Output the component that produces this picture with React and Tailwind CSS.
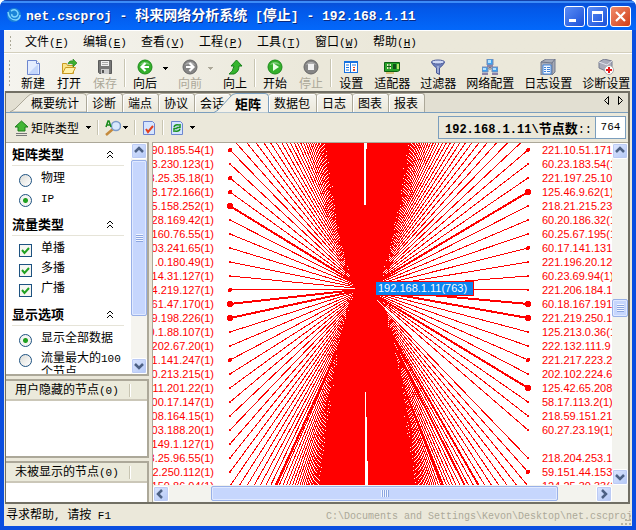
import React from 'react';

const leftNodes = [
  ['90.185.54(1)', 2], ['3.230.123(1)', 1], ['8.25.35.18(1)', 2], ['8.172.166(1)', 2], ['5.158.252(1)', 3],
  ['28.169.42(1)', 1], ['160.76.55(1)', 1], ['03.241.65(1)', 1], ['.0.180.49(1)', 1], ['14.31.127(1)', 1],
  ['4.219.127(1)', 2], ['61.47.170(1)', 3], ['9.198.226(1)', 3], ['0.1.88.107(1)', 1], ['202.67.20(1)', 1],
  ['1.141.247(1)', 2], ['0.213.215(1)', 1], ['11.201.22(1)', 1], ['00.17.147(1)', 1], ['08.164.15(1)', 1],
  ['03.188.20(1)', 1], ['149.1.127(1)', 1], ['8.25.96.55(1)', 1], ['2.250.112(1)', 1], ['150.86.04(1)', 1],
];

const rightNodes = [
  ['221.10.51.171', 2], ['60.23.183.54(1)', 1], ['221.197.25.10', 1], ['125.46.9.62(1)', 3], ['218.21.215.23', 1],
  ['60.20.186.32(1)', 1], ['60.25.67.195(1)', 1], ['60.17.141.131', 2], ['221.196.20.12', 1], ['60.23.69.94(1)', 1],
  ['221.206.184.1', 1], ['60.18.167.191', 3], ['221.219.250.1', 3], ['125.213.0.36(1)', 1], ['222.132.111.9', 1],
  ['221.217.223.2', 2], ['202.102.224.6', 1], ['125.42.65.208', 3], ['58.17.113.2(1)', 1], ['218.59.151.21', 1],
  ['60.27.23.19(1)', 1], ['', 0], ['218.204.253.1', 1], ['59.151.44.153', 2], ['124.25.30.33(1)', 1],
];

const HUB = { x: 151, y: 146 };
const DOT = { 1: 1, 2: 2, 3: 3 };

function Fan({ x, nodes }) {
  const rows = [];
  for (let i = -170; i < 200; i++) {
    const node = nodes[i];
    if (node && node[1] === 0) continue;
    rows.push({ i, y: 7 + i * 14, size: node ? node[1] : 1 });
  }
  return (
    <g>
      {rows.map((r) => (
        <line key={r.i} x1={HUB.x} y1={HUB.y} x2={x} y2={r.y} strokeWidth={r.size === 3 ? 2 : 1} />
      ))}
      {nodes.map(([, size], i) =>
        size ? <circle key={i} cx={x} cy={7 + i * 14} r={DOT[size]} fill="#f00" stroke="none" /> : null
      )}
    </g>
  );
}

function MatrixGraph() {
  return (
    <svg viewBox="0 0 326 343" width="326" height="343" shapeRendering="crispEdges" stroke="#f00" className="block" aria-label="矩阵">
      <Fan x={16} nodes={leftNodes} />
      <Fan x={314} nodes={rightNodes} />
      <g strokeWidth="2">
        <path d="M151 146 62 343M151 146 229 343M151 146 251 343M151 146 265 343" fill="none" />
      </g>
      <path d="M132 0h40l-13 146 13 197h-42l13-197z" fill="#f00" stroke="none" />
      <path d="M150 0h3v6h-1v56h-2zM151 249h1v25h1v44h1v25h-3v-69h0z" fill="#fff" stroke="none" />
    </svg>
  );
}

const Lat = ({ children, className = 'text-[11px]' }) => (
  <span className={`font-['Liberation_Mono',monospace] ${className}`}>{children}</span>
);

const Grip = ({ className }) => (
  <span className={`w-[3px] shrink-0 bg-[radial-gradient(circle,#aaa796_1px,transparent_1px)] bg-[length:3px_4px] ${className}`} />
);

const Caret = ({ muted }) => (
  <svg width="5" height="3" className="shrink-0" shapeRendering="crispEdges">
    <path d="M0 0h5L2.5 3z" fill={muted ? '#aca899' : '#000'} />
  </svg>
);

const Sep = ({ className }) => <span className={`w-[2px] shrink-0 border-l border-[#c8c5b2] bg-white ${className}`} />;

function Round({ color, children }) {
  return (
    <>
      <circle cx="8" cy="8" r="7" fill={color[0]} stroke={color[1]} />
      <path d="M3 6a5.500 5 0 0 1 10 0q-5-2-10 0z" fill="#fff" opacity=".35" />
      {children}
    </>
  );
}
const GREEN = ['#35b02c', '#1c8a1a'];
const GREY = ['#858585', '#666'];

const icons = {
  new: (
    <>
      <path d="M2.500 1.500h9l3 3v11h-12z" fill="#e4edff" stroke="#6d86cf" />
      <path d="M4 14 13 5v10H4z" fill="#c3d6fb" />
      <path d="M11.500 1.500v3h3" fill="#fff" stroke="#6d86cf" />
    </>
  ),
  open: (
    <>
      <path d="M1.500 14.500v-10h4l1 2h6v8z" fill="#fbe58a" stroke="#c99a22" />
      <path d="m1.500 14.500 3-6h10l-3 6z" fill="#fff2a8" stroke="#c99a22" />
      <path d="M7 5q1-4 5-3V0l4 4-4 4V5q-3-1-5 0z" fill="#3eb030" stroke="#1f7f1c" strokeWidth=".6" />
    </>
  ),
  save: (
    <>
      <path d="M1.500 1.500h13v13h-12l-1-1z" fill="#777" stroke="#5b5b5b" />
      <path d="M4 2h8v5H4z" fill="#f0f0f0" />
      <path d="M5 3.500h6M5 5.500h6" stroke="#aaa" />
      <path d="M4 10h8v5H4z" fill="#ccc" />
      <path d="M5 11h2v3H5z" fill="#555" />
    </>
  ),
  back: <Round color={GREEN}><path d="M8.500 4 4.500 8l4 4M5 8h7" fill="none" stroke="#fff" strokeWidth="2.200" /></Round>,
  forward: <Round color={GREY}><path d="m7.500 4 4 4-4 4M11 8H4" fill="none" stroke="#fff" strokeWidth="2.200" /></Round>,
  up: <path d="M9.500 1 15 7h-3q0 6-5 8H2q4-2 5-8H4z" fill="#35b52d" stroke="#16801a" />,
  play: <Round color={GREEN}><path d="m6 4 6 4-6 4z" fill="#e9ffe4" /></Round>,
  stop: <Round color={GREY}><path d="M5 5h6v6H5z" fill="#f1f1f1" /></Round>,
  settings: (
    <>
      <path d="M1 2h14v12H1z" fill="#1772e0" />
      <path d="M2 4h5v9H2zM8 4h6v9H8z" fill="#fff" />
      <path d="M3 6h3M3 8.500h3M3 11h3" stroke="#1772e0" />
      <path d="M9 5h4v2H9z" fill="#8bbdf5" />
      <path d="M10 8h2v1h-2zM10 10h2v2h-2z" fill="#e64d28" />
    </>
  ),
  adapter: (
    <>
      <path d="M.5 3.500h15v8l-2 1H.5z" fill="#28a32a" stroke="#0c6112" />
      <path d="M3 5h4v5H3z" fill="#e8f3c5" />
      <path d="M3 7.500h4M5 5v5" stroke="#0c6112" />
      <path d="M9 5h3v5H9z" fill="#11501a" />
      <path d="M3 13v2M5 13v2M7 13v2M9 13v2" stroke="#c29a22" />
      <path d="M13 5h2v5h-2z" fill="#b7e66a" />
    </>
  ),
  filter: (
    <>
      <path d="M1.500 3q0 2 5 6v5l3 1.500V9q5-4 5-6z" fill="#7183bd" stroke="#4a5a98" />
      <ellipse cx="8" cy="3" rx="6.500" ry="2" fill="#cfd9f5" stroke="#4a5a98" />
      <path d="m8 7v7" stroke="#c9d4f3" />
    </>
  ),
  network: (
    <>
      <path d="M8 7v4M8 8l-4 3M8 8l4 3" stroke="#777" />
      <path d="M5 0h6v6H5zM0 8h6v5H0zM10 8h6v5h-6z" fill="#3fa2ee" stroke="#7c89b2" />
      <path d="M6 1h3v3H6zM1 9h3v2H1zM11 9h3v2h-3z" fill="#b3e1ff" />
      <path d="M5 7h6M0 15h6M10 15h6" stroke="#8b83a8" strokeWidth="2" />
    </>
  ),
  log: (
    <>
      <path d="m1 3 5-3h9v13l-3 3H1z" fill="#a6abb8" stroke="#737a8d" />
      <path d="m1 3 11 1 3-4M12 4v12" fill="none" stroke="#6f7689" />
      <path d="M3 6h8v9H3z" fill="#f1f7ff" stroke="#3e82d8" />
      <path d="M4 8.500h2M7 8.500h3M4 10.500h2M7 10.500h3M4 12.500h2M7 12.500h3" stroke="#3e82d8" />
    </>
  ),
  diagnose: (
    <>
      <path d="m1 3 5-3 8 2v7l-4 4-9-4z" fill="#a9acbb" stroke="#777c90" />
      <path d="m1 3 8 3 5-4" fill="none" stroke="#e1e3ec" />
      <circle cx="11" cy="11" r="4.500" fill="#fff" stroke="#aaa" />
      <path d="M11 8v6M8 11h6" stroke="#e31b1b" strokeWidth="2" />
    </>
  ),
};

const Icon = ({ name }) => <svg viewBox="0 0 16 16" width="16" height="16">{icons[name]}</svg>;

function Tool({ icon, label, muted }) {
  return (
    <button type="button" disabled={muted} className={`flex h-full shrink-0 flex-col items-center pt-[5px] leading-[15px] ${label.length > 2 ? 'px-[5px]' : 'px-[6px]'} ${muted ? 'text-[#aca899]' : ''}`}>
      <Icon name={icon} />
      {label}
    </button>
  );
}

const CaretBtn = ({ muted, label }) => (
  <button type="button" aria-label={label} className="flex h-full w-[9px] shrink-0 items-start pt-[13px]"><Caret muted={muted} /></button>
);

const arrows = { up: 'm4 9 4-4 4 4', down: 'm4 6 4 4 4-4', left: 'M9 4 5 8l4 4', right: 'm6 4 4 4-4 4' };
const Arrow = ({ dir }) => (
  <button type="button" aria-label={dir} className="size-4 shrink-0 rounded-[2px] border border-white bg-linear-to-br from-[#dce6ff] to-[#b4c8f6] shadow-[inset_0_0_0_1px_#bccbf5]">
    <svg viewBox="1 1 14 14" width="14" height="14"><path d={arrows[dir]} fill="none" stroke="#4d6185" strokeWidth="2.500" /></svg>
  </button>
);

function Thumb({ className, across }) {
  return (
    <div className={`flex items-center justify-center rounded-[2px] border border-[#98b0e8] bg-[#c6d6fd] shadow-[inset_0_0_0_1px_#e0e9ff] ${className}`}>
      <span className={across
        ? 'h-[7px] w-[8px] bg-[repeating-linear-gradient(90deg,#f2f6ff_0_1px,#8ca6e0_1px_2px)]'
        : 'h-[8px] w-[7px] bg-[repeating-linear-gradient(180deg,#f2f6ff_0_1px,#8ca6e0_1px_2px)]'} />
    </div>
  );
}

function Group({ title, children }) {
  return (
    <section className="pb-[3px] pl-[6px]">
      <h2 className="mr-[7px] flex h-[23px] items-center justify-between border-b border-[#e6e4d8] pr-[10px] text-[13px] leading-[20px] font-bold">
        {title}
        <svg width="8" height="9" viewBox="0 0 8 9"><path d="M1 4l3-3 3 3M1 8l3-3 3 3" fill="none" stroke="#000" /></svg>
      </h2>
      <div className="pt-[4px]">{children}</div>
    </section>
  );
}

function Option({ type, name, label, checked }) {
  return (
    <label className="flex h-[20px] items-start pl-[7px] leading-[12px]">
      {type === 'radio' ? (
        <input type="radio" name={name} defaultChecked={checked} className="mt-[4px] mr-[9px] size-[13px] shrink-0 appearance-none rounded-full border border-[#1d5281] bg-linear-to-br from-[#dcdcd7] to-white checked:bg-[radial-gradient(circle,#21a121_2px,#f4f4f1_3px)]" />
      ) : (
        <span className="relative mt-[4px] mr-[9px] size-[13px] shrink-0">
          <input type="checkbox" defaultChecked={checked} className="block size-[13px] appearance-none border border-[#1d5281] bg-[#f6f6f3]" />
          <svg viewBox="0 0 13 13" width="13" height="13" className="pointer-events-none absolute inset-0"><path d="m3 6 2.500 3L10 4" fill="none" stroke="#21a121" strokeWidth="2" /></svg>
        </span>
      )}
      <span className="pt-px">{label}</span>
    </label>
  );
}

function HiddenList({ title, className }) {
  return (
    <section className={`flex flex-col border-t-2 border-r-2 border-[#aca899] bg-white ${className}`}>
      <h3 className="flex h-[20px] shrink-0 items-center border-b-2 border-[#cbc7b8] bg-[#ebeadb] pl-[9px] leading-[18px]">
        <span className="w-[114px]">{title}<Lat>(0)</Lat></span>
        <Sep className="h-[13px]" />
      </h3>
    </section>
  );
}

const Tab = ({ children }) => (
  <button type="button" className="h-[19px] shrink-0 rounded-t-[3px] border-t border-r border-[#aca899] bg-linear-to-b from-[#f6f5f0] to-[#ebe8da] pr-[6px] pl-[5px] leading-[18px] shadow-[inset_1px_1px_0_#fff]">{children}</button>
);

const menus = [['文件', 'F'], ['编辑', 'E'], ['查看', 'V'], ['工程', 'P'], ['工具', 'T'], ['窗口', 'W'], ['帮助', 'H']];

export default function App() {
  return (
    <div className="flex h-screen min-h-[530px] flex-col overflow-hidden rounded-t-[7px] bg-[#0a4ee0] font-['Noto_Sans_CJK_SC',sans-serif] text-[12px] whitespace-nowrap text-black">
      <header className="flex h-[30px] shrink-0 items-center bg-linear-to-b from-[#0a4cd0] via-[#0358e8] via-30% to-[#0368fb] pr-[5px] pl-[6px] shadow-[inset_0_1px_0_#1540a8,inset_0_3px_0_#3c8cf8]">
        <svg viewBox="0 0 16 16" width="16" height="16" className="mr-[4px]">
          <circle cx="8" cy="8" r="7" fill="#1b84d8" />
          <path d="M2 5q1 8 8 8 4-1 4-5M5 4q5-3 7 2 0 4-4 4-3-1-2-3" fill="none" stroke="#7fd4ff" strokeWidth="1.500" />
        </svg>
        <h1 className="flex-1 text-[14px] leading-[20px] font-bold text-white [text-shadow:1px_1px_0_#0a2a80]">
          <Lat className="text-[13px]">net.cscproj - </Lat>科来网络分析系统<Lat className="text-[13px]"> [</Lat>停止<Lat className="text-[13px]">] - 192.168.1.11</Lat>
        </h1>
        <div className="flex gap-[2px] pt-[3px]">
          <button type="button" aria-label="最小化" className="size-[21px] rounded-[3px] border border-white bg-linear-to-br from-[#5a8cf5] to-[#1a4fd8]">
            <svg width="19" height="19"><path d="M4 12h7v3H4z" fill="#fff" /></svg>
          </button>
          <button type="button" aria-label="最大化" className="size-[21px] rounded-[3px] border border-white bg-linear-to-br from-[#5a8cf5] to-[#1a4fd8]">
            <svg width="19" height="19" shapeRendering="crispEdges"><path d="M4 4h11v11H4zM5 7v7h9V7z" fill="#fff" fillRule="evenodd" /></svg>
          </button>
          <button type="button" aria-label="关闭" className="size-[21px] rounded-[3px] border border-white bg-linear-to-br from-[#f08a68] to-[#cf3c12]">
            <svg width="19" height="19"><path d="m5 5 9 9M14 5l-9 9" stroke="#fff" strokeWidth="2.200" /></svg>
          </button>
        </div>
      </header>

      <div className="mx-[4px] mb-[4px] flex min-h-0 flex-1 flex-col border-t border-white bg-[#ebe8da]">
        <nav className="flex h-[22px] shrink-0 items-center gap-[16px] border-b border-[#d3cfbd] bg-linear-to-r from-[#f5f4ef] to-[#ebe8da] to-60% pl-[5px]">
          <Grip className="-mr-[3px] h-[14px]" />
          {menus.map(([label, key]) => (
            <button key={key} type="button" className="w-[42px] shrink-0 text-left leading-[18px]">{label}<Lat>(<u>{key}</u>)</Lat></button>
          ))}
        </nav>

        <div role="toolbar" className="flex h-[38px] shrink-0 items-center overflow-hidden border-t border-white bg-linear-to-r from-[#f5f4ef] to-[#ebe8da] to-50% pl-[4px]">
          <Grip className="mr-[4px] h-[28px]" />
          <Tool icon="new" label="新建" />
          <Tool icon="open" label="打开" />
          <Tool icon="save" label="保存" muted />
          <Sep className="mx-px h-[28px]" />
          <Tool icon="back" label="向后" />
          <CaretBtn label="向后列表" />
          <Tool icon="forward" label="向前" muted />
          <CaretBtn label="向前列表" muted />
          <Tool icon="up" label="向上" />
          <Sep className="mx-px h-[28px]" />
          <Tool icon="play" label="开始" />
          <Tool icon="stop" label="停止" muted />
          <Sep className="mx-px h-[28px]" />
          <Tool icon="settings" label="设置" />
          <Tool icon="adapter" label="适配器" />
          <Tool icon="filter" label="过滤器" />
          <Tool icon="network" label="网络配置" />
          <Tool icon="log" label="日志设置" />
          <Tool icon="diagnose" label="诊断设置" />
        </div>

        <main className="mr-[2px] ml-px flex min-h-0 flex-1 flex-col border-2 border-l border-[#716f64]">
          <div className="flex h-[20px] shrink-0 items-end border-b border-[#7b9ebd] bg-[#e2dfd2]">
            <button type="button" className="relative h-[19px] w-[81px] shrink-0 pl-[25px] text-left leading-[18px]">
              <svg viewBox="0 0 81 19" width="81" height="19" className="absolute inset-0">
                <path d="M4 19Q9 17 14 11L21 4q3-3.500 7-3.500h49q3 0 3.500 3V19z" fill="#f1efe6" stroke="#aca899" />
              </svg>
              <span className="relative">概要统计</span>
            </button>
            <Tab>诊断</Tab>
            <Tab>端点</Tab>
            <Tab>协议</Tab>
            <Tab>会话</Tab>
            <button type="button" className="relative -mb-px -ml-[17px] h-[20px] w-[55px] shrink-0 pl-[21px] text-left text-[13px] leading-[19px] font-bold">
              <svg viewBox="0 0 55 20" width="55" height="20" className="absolute inset-0">
                <path d="M0 19.500Q4 18 8 13l8-9q3-3.500 6-3.500h29q3 0 3.500 3v16" fill="#f3f1e9" stroke="#7b9ebd" />
              </svg>
              <span className="relative">矩阵</span>
            </button>
            <Tab>数据包</Tab>
            <Tab>日志</Tab>
            <Tab>图表</Tab>
            <Tab>报表</Tab>
            <div className="flex h-full flex-1 items-start justify-end gap-[9px] pt-[3px] pr-[5px]">
              <button type="button" aria-label="上一页" className="h-[9px]"><svg width="5" height="9"><path d="M4.500.5v8l-4-4z" fill="none" stroke="#000" /></svg></button>
              <button type="button" aria-label="下一页" className="h-[9px]"><svg width="5" height="9"><path d="M.5.5v8l4-4z" fill="none" stroke="#000" /></svg></button>
            </div>
          </div>

          <div className="flex h-[29px] shrink-0 items-center pr-[2px] pl-[8px]">
            <button type="button" className="flex items-center gap-[2px] leading-[18px]">
              <svg width="15" height="16" viewBox="0 0 15 16">
                <path d="m7.500 1 6.500 6h-3v4H4V7H1z" fill="#42b636" stroke="#1d7e1b" />
                <path d="M2 13.500h11M2 15.500h11" stroke="#777" />
              </svg>
              矩阵类型
              <span className="flex pl-[5px]"><Caret /></span>
            </button>
            <Sep className="mx-[6px] h-[15px]" />
            <button type="button" aria-label="查找" className="flex items-center gap-[2px]">
              <svg width="16" height="16" viewBox="0 0 16 16">
                <path d="m1 15 7-6" stroke="#c48a3c" strokeWidth="2.500" />
                <circle cx="11" cy="6" r="4.500" fill="#d8e8fd" stroke="#7c9ccb" strokeWidth="1.500" />
                <path d="m1 7 2-6h1l2 6M2 5h3" fill="none" stroke="#188a1c" strokeWidth="1.500" />
              </svg>
              <Caret />
            </button>
            <Sep className="mr-[6px] ml-[6px] h-[15px]" />
            <button type="button" aria-label="选项">
              <svg width="14" height="16" viewBox="0 0 14 16">
                <path d="M1.500 1.500h9l2 2v11h-11z" fill="#d5e5ff" stroke="#6d86cf" />
                <path d="m4 9 2 3 5-6" fill="none" stroke="#e4421e" strokeWidth="2" />
              </svg>
            </button>
            <Sep className="mx-[6px] h-[15px]" />
            <button type="button" aria-label="刷新" className="flex items-center gap-[6px]">
              <svg width="14" height="16" viewBox="0 0 14 16">
                <path d="M1.500 1.500h9l2 2v11h-11z" fill="#d5e5ff" stroke="#6d86cf" />
                <path d="M4 7q1-3 5-2M10 4v3.500H6.500M10 9q-1 3-5 2M4 12V8.500h3.500" fill="none" stroke="#1c9420" strokeWidth="1.500" />
              </svg>
              <Caret />
            </button>
            <div className="ml-auto flex h-[23px] border border-[#7b9ebd] leading-[21px]">
              <label htmlFor="node-count" className="w-[156px] pl-[6px] text-[13px] font-bold">
                <Lat className="text-[12px]">192.168.1.11\</Lat>节点数<Lat className="text-[12px] font-normal">::</Lat>
              </label>
              <input id="node-count" readOnly value="764" className="w-[30px] border-l border-[#7b9ebd] bg-white text-center font-['Liberation_Mono',monospace] text-[11px]" />
            </div>
          </div>

          <div className="flex min-h-0 flex-1">
            <aside className="flex w-[143px] shrink-0 flex-col gap-[3px]">
              <div className="flex h-[234px] shrink-0 border-t border-r-2 border-b-2 border-[#aca899] bg-white">
                <div className="min-w-0 flex-1 overflow-hidden">
                  <Group title="矩阵类型">
                    <Option type="radio" name="kind" label="物理" />
                    <Option type="radio" name="kind" label={<Lat>IP</Lat>} checked />
                  </Group>
                  <Group title="流量类型">
                    <Option type="checkbox" label="单播" checked />
                    <Option type="checkbox" label="多播" checked />
                    <Option type="checkbox" label="广播" checked />
                  </Group>
                  <Group title="显示选项">
                    <Option type="radio" name="show" label="显示全部数据" checked />
                    <Option type="radio" name="show" label={<>流量最大的<Lat>100</Lat><br />个节点</>} />
                  </Group>
                </div>
                <div className="flex w-4 shrink-0 flex-col gap-px bg-[#f5f4ef]">
                  <Arrow dir="up" />
                  <Thumb className="h-[156px]" />
                  <span className="flex-1" />
                  <Arrow dir="down" />
                </div>
              </div>
              <HiddenList title="用户隐藏的节点" className="h-[79px] shrink-0 border-b-2" />
              <HiddenList title="未被显示的节点" className="min-h-0 flex-1" />
            </aside>

            <div className="ml-[3px] flex min-w-0 flex-1 flex-col border-t border-l border-[#aca899] bg-white">
              <div className="flex min-h-0 flex-1">
                <div className="flex min-w-0 flex-1 overflow-hidden font-['Liberation_Sans',sans-serif] text-[11px] leading-[14px] text-[#f00]">
                  <ul className="w-[61px] shrink-0 overflow-hidden">
                    {leftNodes.map(([ip], i) => <li key={i} className="flex h-[14px] justify-end">{ip}</li>)}
                  </ul>
                  <div className="relative h-full flex-1 overflow-hidden">
                    <MatrixGraph />
                    <div className="absolute top-[138px] left-[161px] h-[15px] w-[99px] border border-[#f00] bg-[#0a84f0] pl-[2px] leading-[13px] text-white">192.168.1.11(763)</div>
                  </div>
                  <ul className="w-[70px] shrink-0 overflow-hidden">
                    {rightNodes.map(([ip], i) => <li key={i} className="h-[14px]">{ip}</li>)}
                  </ul>
                </div>
                <div className="flex w-4 shrink-0 flex-col bg-[#f3f3ee]">
                  <Arrow dir="up" />
                  <span className="flex-1 basis-[140px]" />
                  <Thumb className="h-[18px] shrink-0" />
                  <span className="flex-1 basis-[153px]" />
                  <Arrow dir="down" />
                </div>
              </div>
              <div className="flex h-[17px] shrink-0 items-center bg-[#f3f3ee] pr-[16px]">
                <Arrow dir="left" />
                <span className="w-[42px] shrink-0" />
                <Thumb across className="h-[15px] flex-1" />
                <span className="w-[38px] shrink-0" />
                <Arrow dir="right" />
              </div>
            </div>
          </div>
        </main>

        <footer className="flex h-[22px] shrink-0 items-center justify-between overflow-hidden pl-[2px] leading-[18px]">
          <span>寻求帮助<Lat>, </Lat>请按<Lat> F1</Lat></span>
          <span className="relative text-[#aca899]">
            <Lat className="text-[10px]">C:\Documents and Settings\Kevon\Desktop\net.cscproj</Lat>
            <svg width="12" height="12" className="absolute right-0 bottom-0"><path d="M9 1h2v2H9zM9 5h2v2H9zM9 9h2v2H9zM5 5h2v2H5zM5 9h2v2H5zM1 9h2v2H1z" fill="#b8b4a2" /></svg>
          </span>
        </footer>
      </div>
    </div>
  );
}
